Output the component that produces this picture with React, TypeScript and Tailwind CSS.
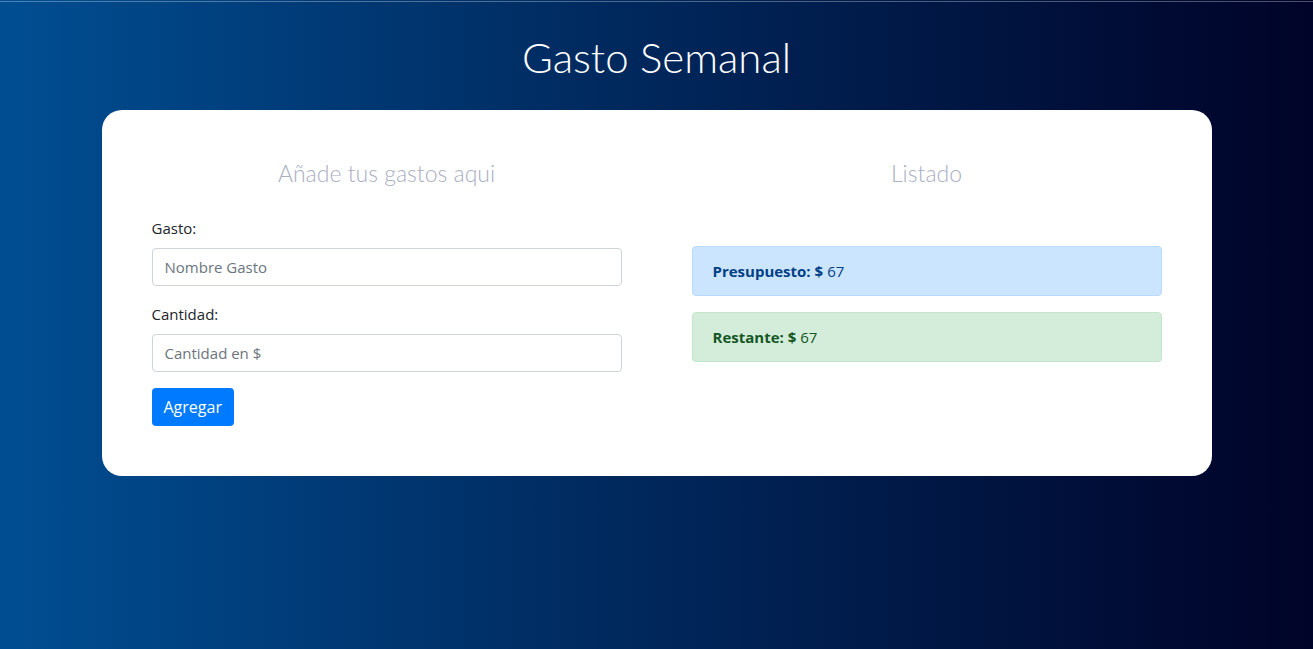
export default function App() {
  return (
    <div className="min-h-screen w-full bg-gradient-to-r from-[#004e92] to-[#000428] pt-px font-['Open_Sans',sans-serif]">
      {/* thin highlight line at the very top */}
      <div className="h-px w-full bg-white/30" />

      <header className="pt-[30px] pb-[28px] text-center">
        <h1 className="font-['Lato',sans-serif] text-[42px] font-light leading-[50px] text-white">
          Gasto Semanal
        </h1>
      </header>

      <main className="mx-auto w-[1110px] rounded-[20px] bg-white p-[50px]">
        <div className="grid grid-cols-2 gap-[70px]">
          {/* Form column */}
          <section>
            <h2 className="text-center font-['Lato',sans-serif] text-[23px] font-light leading-[26px] text-[#a9aec2]">
              Añade tus gastos aqui
            </h2>

            <form className="mt-[30px]">
              <div className="mb-4">
                <label className="mb-2 block text-[15px] leading-6 text-[#212529]">Gasto:</label>
                <input
                  type="text"
                  placeholder="Nombre Gasto"
                  className="block h-[38px] w-full rounded border border-[#ced4da] px-3 text-[15px] text-[#495057] placeholder:text-[#6c757d] outline-none"
                />
              </div>
              <div className="mb-4">
                <label className="mb-2 block text-[15px] leading-6 text-[#212529]">Cantidad:</label>
                <input
                  type="number"
                  placeholder="Cantidad en $"
                  className="block h-[38px] w-full rounded border border-[#ced4da] px-3 text-[15px] text-[#495057] placeholder:text-[#6c757d] outline-none"
                />
              </div>
              <button
                type="submit"
                className="h-[38px] rounded bg-[#007bff] px-3 text-base text-white"
              >
                Agregar
              </button>
            </form>
          </section>

          {/* Listing column */}
          <section>
            <h2 className="text-center font-['Lato',sans-serif] text-[23px] font-light leading-[26px] text-[#a9aec2]">
              Listado
            </h2>

            <div className="mt-[60px] flex flex-col gap-4">
              <div className="flex h-[50px] items-center rounded border border-[#b8daff] bg-[#cce5ff] px-5 text-[15px] text-[#004085]">
                <span className="font-bold">Presupuesto: $</span>
                <span className="ml-1">67</span>
              </div>
              <div className="flex h-[50px] items-center rounded border border-[#c3e6cb] bg-[#d4edda] px-5 text-[15px] text-[#155724]">
                <span className="font-bold">Restante: $</span>
                <span className="ml-1">67</span>
              </div>
            </div>
          </section>
        </div>
      </main>
    </div>
  );
}
